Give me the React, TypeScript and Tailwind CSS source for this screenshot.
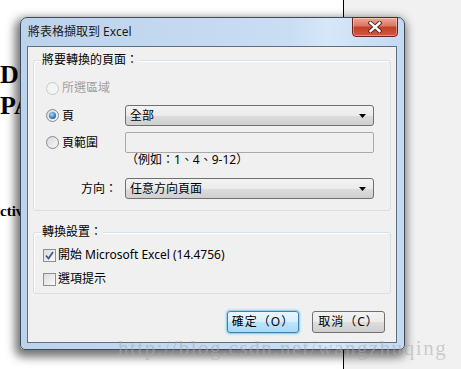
import React from "react";

const FONT = "font-['Noto_Sans','Noto_Sans_CJK_TC',sans-serif]";

function Radio({ checked, disabled }: { checked?: boolean; disabled?: boolean }) {
  return (
    <span
      className={`relative flex h-[13px] w-[13px] shrink-0 items-center justify-center rounded-full border ${
        disabled ? "border-[#c9c9c9] bg-[#f4f4f4]" : "border-[#8a8a8a] bg-[linear-gradient(135deg,#d8d8d8,#f8f8f8)]"
      }`}
    >
      {checked && (
        <span className="h-[7px] w-[7px] rounded-full bg-[radial-gradient(circle_at_40%_35%,#a8dcfb,#2a6fb8_65%,#164a88)]" />
      )}
    </span>
  );
}

function Checkbox({ checked }: { checked?: boolean }) {
  return (
    <span className="flex h-[13px] w-[13px] shrink-0 items-center justify-center border border-[#8e8f8f] bg-[linear-gradient(135deg,#dcdcdc,#fafafa)]">
      {checked && (
        <svg width="9" height="9" viewBox="0 0 9 9">
          <path d="M1 4.5 L3.5 7.5 L8 1" stroke="#3c5a9a" strokeWidth="1.8" fill="none" />
        </svg>
      )}
    </span>
  );
}

function Select({ value, h }: { value: string; h: string }) {
  return (
    <div
      className={`flex w-[249px] ${h} items-center justify-between rounded-[3px] border border-[#707070] bg-[linear-gradient(#f3f3f3,#ebebeb_50%,#dddddd_51%,#cfcfcf)] pl-[4px] pr-[7px] text-[12px] text-black`}
    >
      <span className="leading-none">{value}</span>
      <svg width="7" height="4" viewBox="0 0 7 4">
        <path d="M0 0 H7 L3.5 4 Z" fill="#000" />
      </svg>
    </div>
  );
}

export default function App() {
  return (
    <div className={`relative h-[369px] w-[461px] overflow-hidden bg-white ${FONT}`}>
      {/* desktop background */}
      <div className="absolute bottom-0 left-[344px] right-0 top-0 bg-[#f1f1f1]" />
      <div className="absolute bottom-0 left-[343px] top-0 w-px bg-black" />
      <div className="absolute left-0 top-[59px] font-['Liberation_Serif',serif] text-[26px] font-bold leading-[31px] text-black">
        D
        <br />
        PA
      </div>
      <div className="absolute left-0 top-[200px] font-['Liberation_Serif',serif] text-[15px] font-bold text-black">
        ctiv
      </div>

      {/* window */}
      <div className="absolute left-[20px] top-[17px] flex h-[333px] w-[385px] flex-col rounded-b-[5px] rounded-t-[7px] border border-[#3d4c5e] bg-[linear-gradient(90deg,#bcd3ec,#c9ddf3_70%,#d6e7f8_80%,#c4daf1)] shadow-[-2px_4px_10px_3px_rgba(0,0,0,0.55)]">
        {/* title bar */}
        <div className="flex h-[28px] items-start justify-between">
          <span className="pl-[7px] pt-[6px] text-[12px] leading-[16px] text-[#1a1a1a]">將表格擷取到 Excel</span>
          <div className="mr-[6px] mt-[-1px] flex h-[20px] w-[46px] items-center justify-center rounded-b-[4px] border border-[#6b2218] bg-[linear-gradient(#e9a898,#d97560_45%,#c23f27_50%,#cf5a3f)] shadow-[inset_0_0_0_1px_rgba(255,255,255,0.35)]">
            <svg width="14" height="12" viewBox="0 0 14 12">
              <path d="M2.5 2 L11.5 10 M11.5 2 L2.5 10" stroke="#4a1a12" strokeWidth="4.2" strokeLinecap="square" />
              <path d="M2.5 2 L11.5 10 M11.5 2 L2.5 10" stroke="#ffffff" strokeWidth="2.4" strokeLinecap="square" />
            </svg>
          </div>
        </div>

        {/* client area */}
        <div className="ml-[6px] flex h-[297px] w-[370px] flex-col border border-[#5f6f82] bg-[#f0f0f0] px-[5px] text-[12px] text-black">
          {/* group 1 */}
          <div className="relative mt-[13px] h-[151px] rounded-[3px] border border-[#d5dfe5] shadow-[inset_1px_1px_0_#ffffff]">
            <span className="absolute left-[7px] top-[-9px] bg-[#f0f0f0] px-[1px] leading-[16px]">將要轉換的頁面：</span>
            <div className="flex flex-col pl-[12px] pt-[17px]">
              <div className="flex h-[20px] items-center gap-[3px] text-[#a0a0a0]">
                <Radio disabled />
                <span>所選區域</span>
              </div>
              <div className="mt-[7px] flex h-[21px] items-center">
                <div className="flex w-[79px] items-center gap-[3px]">
                  <Radio checked />
                  <span>頁</span>
                </div>
                <Select value="全部" h="h-[21px]" />
              </div>
              <div className="mt-[6px] flex h-[21px] items-center">
                <div className="flex w-[79px] items-center gap-[3px]">
                  <Radio />
                  <span>頁範圍</span>
                </div>
                <div className="h-[21px] w-[249px] rounded-[2px] border border-[#a9a9a9] bg-[#f0f0f0]" />
              </div>
              <div className="flex h-[14px] items-center pl-[80px] leading-none">（例如：1、4、9-12）</div>
              <div className="mt-[11px] flex h-[21px] items-center">
                <div className="w-[79px] pl-[35px]">方向：</div>
                <Select value="任意方向頁面" h="h-[21px]" />
              </div>
            </div>
          </div>

          {/* group 2 */}
          <div className="relative mt-[21px] h-[62px] rounded-[3px] border border-[#d5dfe5] shadow-[inset_1px_1px_0_#ffffff]">
            <span className="absolute left-[7px] top-[-9px] bg-[#f0f0f0] px-[1px] leading-[16px]">轉換設置：</span>
            <div className="flex flex-col pl-[9px] pt-[14px]">
              <div className="flex h-[16px] items-center gap-[2px]">
                <Checkbox checked />
                <span>開始 Microsoft Excel (14.4756)</span>
              </div>
              <div className="mt-[8px] flex h-[16px] items-center gap-[2px]">
                <Checkbox />
                <span>選項提示</span>
              </div>
            </div>
          </div>

          {/* buttons */}
          <div className="mr-[6px] mt-[17px] flex justify-end gap-[13px]">
            <div className="flex h-[22px] w-[72px] items-center justify-center rounded-[3px] border border-[#3c7fb1] bg-[linear-gradient(#e8f6fd,#d8effc_50%,#bee6fd_51%,#a7d9f5)] shadow-[0_0_2px_1px_#7fc8ee] tracking-[1px]">
              確定（O）
            </div>
            <div className="flex h-[22px] w-[73px] items-center justify-center rounded-[3px] border border-[#707070] bg-[linear-gradient(#f2f2f2,#ebebeb_50%,#dddddd_51%,#cfcfcf)] tracking-[1px]">
              取消（C）
            </div>
          </div>
        </div>
      </div>

      {/* watermark */}
      <div className="pointer-events-none absolute left-[118px] top-[333px] font-['Liberation_Serif',serif] text-[21px] tracking-[1.5px] text-[rgba(170,170,170,0.55)]">
        http://blog.csdn.net/wangzhuqing
      </div>
    </div>
  );
}
